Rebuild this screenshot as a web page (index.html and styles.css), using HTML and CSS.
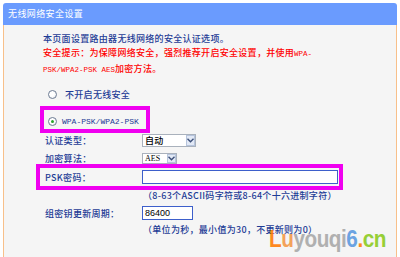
FILE: index.html
```html
<!DOCTYPE html>
<html>
<head>
<meta charset="utf-8">
<link rel="stylesheet" href="styles.css">
</head>
<body>
<div class="wrap">
  <div class="hd">无线网络安全设置</div>
  <div class="bd">
    <div class="intro">
      <p>本页面设置路由器无线网络的安全认证选项。</p>
      <p class="red">安全提示：为保障网络安全，强烈推荐开启安全设置，并使用<span class="mono">WPA-</span></p>
      <p class="red"><span class="mono">PSK/WPA2-PSK AES</span>加密方法。</p>
    </div>
    <div class="radio-row r1"><span class="radio"></span><span class="rlabel">不开启无线安全</span></div>
    <div class="hl hl1">
      <div class="radio-row"><span class="radio on"></span><span class="mono8">WPA-PSK/WPA2-PSK</span></div>
    </div>
    <div class="row rtype">
      <span class="lbl">认证类型：</span>
      <div class="sel sel-auto"><span class="val">自动</span><span class="arr"><svg width="7" height="5" viewBox="0 0 7 5"><path d="M0.5 0.8 L3.5 3.8 L6.5 0.8" fill="none" stroke="#3c4f78" stroke-width="1.4"/></svg></span></div>
    </div>
    <div class="row ralg">
      <span class="lbl">加密算法：</span>
      <div class="sel sel-aes"><span class="val mono-s">AES</span><span class="arr"><svg width="7" height="5" viewBox="0 0 7 5"><path d="M0.5 0.8 L3.5 3.8 L6.5 0.8" fill="none" stroke="#3c4f78" stroke-width="1.4"/></svg></span></div>
    </div>
    <div class="hl hl2">
      <span class="lbl lbl2">PSK密码：</span>
      <div class="inp inp-psk"></div>
    </div>
    <div class="hint">（8-63个ASCII码字符或8-64个十六进制字符）</div>
    <div class="row rgrp">
      <span class="lbl">组密钥更新周期：</span>
      <div class="inp inp-grp">86400</div>
    </div>
    <div class="hint hint2">（单位为秒，最小值为30，不更新则为0）</div>
  </div>
  <div class="wm"><span class="o">L</span><span class="o2">u</span><span class="g">youqi</span><span class="b">6</span><span class="o">.</span><span class="gr">cn</span></div>
</div>
</body>
</html>
```
FILE: styles.css
```css
body {
  margin: 0;
  background: #ffffff;
  font-family: "Noto Sans CJK SC", "Liberation Sans", sans-serif;
  font-size: 9px;
}
p { margin: 0; }
.wrap {
  position: relative;
  margin: 3px 0 0 3px;
  width: 394px;
}
.hd {
  height: 22px;
  line-height: 22px;
  background: #6a9bfe;
  color: #ffffff;
  padding-left: 5px;
  border-radius: 3px 3px 0 0;
  letter-spacing: 0.4px;
}
.bd {
  background: #f5f5f5;
  border-left: 1px solid #f8c08a;
  border-right: 1px solid #f8c08a;
  height: 232px;
  color: #1e3c96;
  letter-spacing: 0.3px;
  font-weight: 500;
}
.intro {
  padding: 6.5px 0 0 39px;
  line-height: 14.5px;
}
.red { color: #ff0000; }
.mono {
  font-family: "Liberation Mono", monospace;
  font-size: 7.5px;
  letter-spacing: 0;
}
.mono8 {
  font-family: "Liberation Mono", monospace;
  font-size: 8px;
  letter-spacing: 0;
  color: #1e3c96;
}
.radio-row {
  display: flex;
  align-items: center;
  height: 14px;
}
.r1 {
  margin-top: 10px;
  padding-left: 44px;
}
.r1 .rlabel { margin-left: 8px; color: #1e3c96; }
.radio {
  width: 9px;
  height: 9px;
  box-sizing: border-box;
  border: 1px solid #6d7c93;
  border-radius: 50%;
  background: radial-gradient(circle at 40% 40%, #ffffff 40%, #dfe3ea 100%);
  display: flex;
  align-items: center;
  justify-content: center;
}
.radio.on::after {
  content: "";
  width: 3px;
  height: 3px;
  border-radius: 50%;
  background: #2aa52a;
}
.hl {
  box-sizing: border-box;
  border: 4px solid #f000f0;
}
.hl1 {
  margin: 5px 0 0 36px;
  width: 110px;
  height: 27px;
  padding: 3px 0 0 4px;
  display: flex;
  align-items: center;
}
.hl1 .mono8 { margin-left: 5px; }
.row {
  display: flex;
  align-items: center;
  padding-left: 41px;
}
.lbl {
  width: 97px;
  flex: none;
}
.rtype { margin-top: 1px; height: 13px; }
.ralg { margin-top: 6px; height: 11px; }
.sel {
  box-sizing: border-box;
  border: 1px solid #a9b1bc;
  background: #ffffff;
  display: flex;
  align-items: center;
  color: #000000;
  position: relative;
}
.sel-auto { width: 54px; height: 13px; }
.sel-aes { width: 35px; height: 11px; }
.sel .val { padding-left: 2px; flex: 1; line-height: 10px; }
.mono-s {
  font-family: "Liberation Serif", serif;
  font-size: 8px;
  letter-spacing: 0;
}
.arr {
  width: 9px;
  align-self: stretch;
  box-sizing: border-box;
  border: 1px solid #b6c4dc;
  background: #e2e9f6;
  display: flex;
  align-items: center;
  justify-content: center;
}
.hl2 {
  margin-left: 32px;
  width: 307px;
  height: 26px;
  padding-left: 5px;
  display: flex;
  align-items: center;
}
.inp {
  box-sizing: border-box;
  height: 14px;
  border: 1px solid #3d5fcb;
  background: #ffffff;
  color: #000000;
  line-height: 12px;
  padding-left: 2px;
  font-family: "Liberation Sans", sans-serif;
  font-weight: normal;
  letter-spacing: 0;
}
.inp-psk { width: 196px; }
.inp-grp { width: 51px; }
.hint {
  padding-left: 139px;
  line-height: 12px;
  height: 12px;
}
.rgrp { margin-top: 4px; height: 14px; }
.hint2 { margin-top: 4px; }
.wm {
  position: absolute;
  left: 266px;
  top: 223px;
  font-family: "Liberation Sans", sans-serif;
  font-weight: bold;
  font-size: 23px;
  letter-spacing: -0.5px;
  transform: scaleX(0.9);
  transform-origin: left top;
  opacity: 0.9;
}
.wm .o { color: #ff7e0a; }
.wm .o2 { color: #f39a4a; }
.wm .g { color: #a9a9a9; }
.wm .b { color: #5d9be0; }
.wm .gr { color: #8ccb22; }
```
